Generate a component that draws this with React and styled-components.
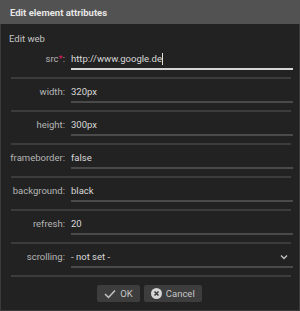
import React from 'react';
import styled, { createGlobalStyle } from 'styled-components';

const GlobalStyle = createGlobalStyle`
  html, body {
    margin: 0;
    padding: 0;
    background: #222222;
  }
  * {
    box-sizing: border-box;
  }
`;

const Dialog = styled.div`
  width: 300px;
  height: 311px;
  background: #222222;
  border: 1px solid #3a3a3a;
  border-top: none;
  font-family: Roboto, "Liberation Sans", sans-serif;
  display: flex;
  flex-direction: column;
`;

const Header = styled.div`
  height: 24px;
  background: #525252;
  color: #e6e6e6;
  font-size: 9.5px;
  font-weight: 700;
  display: flex;
  align-items: center;
  padding-left: 10px;
  margin: 0 -1px;
`;

const Body = styled.div`
  padding: 7px 8px 0 8px;
  display: flex;
  flex-direction: column;
`;

const SectionTitle = styled.div`
  color: #c4c4c4;
  font-size: 9.5px;
  line-height: 12px;
  margin-top: 2px;
  margin-bottom: 1px;
`;

const Row = styled.div`
  display: grid;
  grid-template-columns: 56px 1fr;
  column-gap: 6px;
  align-items: start;
  height: 33px;
  position: relative;

  &::after {
    content: '';
    position: absolute;
    left: 2px;
    right: 0;
    bottom: 0;
    height: 2px;
    background: #3c3c3c;
  }
`;

const Label = styled.div`
  color: #b6b6b6;
  font-size: 9.5px;
  line-height: 16px;
  padding-top: 5px;
  text-align: right;
  white-space: nowrap;
`;

const Required = styled.span`
  color: #d81b60;
`;

const Field = styled.div`
  height: 24px;
  padding-top: 5px;
  line-height: 16px;
  font-size: 9.5px;
  color: #d8d8d8;
  border-bottom: 2px solid ${(p) => (p.focused ? '#d6d6d6' : '#4a4a4a')};
  display: flex;
  align-items: flex-start;
  justify-content: space-between;
  margin-right: -2px;
`;

const Caret = styled.span`
  display: inline-block;
  width: 1px;
  height: 12px;
  background: #e0e0e0;
  margin-top: 2px;
  vertical-align: top;
`;

const Chevron = styled.svg`
  margin-top: 5px;
  margin-right: 5px;
`;

const Footer = styled.div`
  display: flex;
  justify-content: center;
  gap: 4px;
  margin-top: 8px;
  padding-right: 1px;
`;

const Button = styled.button`
  height: 17px;
  padding: 0 7px;
  background: #3d3d3d;
  border: none;
  border-radius: 2px;
  color: #c4c4c4;
  font-family: Roboto, "Liberation Sans", sans-serif;
  font-size: 9.5px;
  display: flex;
  align-items: center;
  gap: 4px;
  cursor: pointer;
`;

const fields = [
  { label: 'src', value: 'http://www.google.de', required: true, focused: true },
  { label: 'width', value: '320px' },
  { label: 'height', value: '300px' },
  { label: 'frameborder', value: 'false' },
  { label: 'background', value: 'black' },
  { label: 'refresh', value: '20' },
  { label: 'scrolling', value: '- not set -', select: true },
];

export default function App() {
  return (
    <>
      <GlobalStyle />
      <Dialog>
        <Header>Edit element attributes</Header>
        <Body>
          <SectionTitle>Edit web</SectionTitle>
          {fields.map((f) => (
            <Row key={f.label}>
              <Label>
                {f.label}
                {f.required && <Required>*</Required>}:
              </Label>
              <Field focused={f.focused}>
                <span>
                  {f.value}
                  {f.focused && <Caret />}
                </span>
                {f.select && (
                  <Chevron width="8" height="6" viewBox="0 0 8 6">
                    <path d="M1 1.5 L4 4.5 L7 1.5" fill="none" stroke="#bdbdbd" strokeWidth="1.5" />
                  </Chevron>
                )}
              </Field>
            </Row>
          ))}
          <Footer>
            <Button>
              <svg width="12" height="10" viewBox="0 0 12 10">
                <path d="M1 5 L4.5 8.5 L11 1.5" fill="none" stroke="#c4c4c4" strokeWidth="1.5" />
              </svg>
              OK
            </Button>
            <Button>
              <svg width="11" height="11" viewBox="0 0 11 11">
                <circle cx="5.5" cy="5.5" r="5.5" fill="#d6d6d6" />
                <path d="M3.5 3.5 L7.5 7.5 M7.5 3.5 L3.5 7.5" stroke="#3d3d3d" strokeWidth="1.6" />
              </svg>
              Cancel
            </Button>
          </Footer>
        </Body>
      </Dialog>
    </>
  );
}
